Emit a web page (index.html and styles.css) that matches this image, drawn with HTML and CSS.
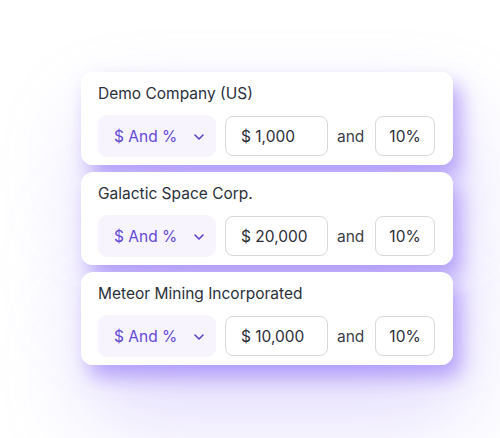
FILE: index.html
```html
<!DOCTYPE html>
<html lang="en">
<head>
<meta charset="utf-8">
<link rel="stylesheet" href="styles.css">
</head>
<body>
<main class="stack">
  <section class="card">
    <h2 class="title">Demo Company (US)</h2>
    <div class="row">
      <div class="select">
        <span>$ And %</span>
        <svg class="chev" width="10" height="6" viewBox="0 0 10 6"><path d="M1 1l4 4 4-4" fill="none" stroke="#5b3fc8" stroke-width="1.6" stroke-linecap="round" stroke-linejoin="round"/></svg>
      </div>
      <div class="input amount">$ 1,000</div>
      <span class="and">and</span>
      <div class="input pct">10%</div>
    </div>
  </section>
  <section class="card">
    <h2 class="title">Galactic Space Corp.</h2>
    <div class="row">
      <div class="select">
        <span>$ And %</span>
        <svg class="chev" width="10" height="6" viewBox="0 0 10 6"><path d="M1 1l4 4 4-4" fill="none" stroke="#5b3fc8" stroke-width="1.6" stroke-linecap="round" stroke-linejoin="round"/></svg>
      </div>
      <div class="input amount">$ 20,000</div>
      <span class="and">and</span>
      <div class="input pct">10%</div>
    </div>
  </section>
  <section class="card">
    <h2 class="title">Meteor Mining Incorporated</h2>
    <div class="row">
      <div class="select">
        <span>$ And %</span>
        <svg class="chev" width="10" height="6" viewBox="0 0 10 6"><path d="M1 1l4 4 4-4" fill="none" stroke="#5b3fc8" stroke-width="1.6" stroke-linecap="round" stroke-linejoin="round"/></svg>
      </div>
      <div class="input amount">$ 10,000</div>
      <span class="and">and</span>
      <div class="input pct">10%</div>
    </div>
  </section>
</main>
</body>
</html>
```
FILE: styles.css
```css
* { box-sizing: border-box; }
html, body { margin: 0; padding: 0; background: #ffffff; }
body {
  width: 500px;
  height: 438px;
  overflow: hidden;
  font-family: Inter, "Noto Sans", sans-serif;
}
.stack {
  position: relative;
  z-index: 0;
  padding: 72px 0 0 81px;
  display: flex;
  flex-direction: column;
  gap: 7px;
  width: 453px;
}
.card {
  position: relative;
  width: 372px;
  height: 93px;
  background: #ffffff;
  border-radius: 12px;
  padding: 0 18px 8px 17px;
}
.card::before {
  content: "";
  position: absolute;
  inset: 0;
  border-radius: 12px;
  z-index: -1;
  box-shadow: 8px 12px 20px rgba(135, 100, 245, 0.55), 10px 50px 90px rgba(160, 135, 250, 0.32);
}
.title {
  margin: 0;
  height: 43px;
  line-height: 44px;
  font-size: 15.5px;
  font-weight: 400;
  color: #2b2f3a;
}
.row {
  display: flex;
  align-items: center;
  height: 42px;
}
.select {
  width: 118px;
  height: 42px;
  border-radius: 9px;
  background: #f7f4fe;
  display: flex;
  align-items: center;
  padding-left: 16px;
  color: #6448d4;
  font-size: 15.5px;
}
.select span { width: 80px; }
.chev { display: block; margin-top: 1px; }
.input {
  height: 40px;
  border: 1px solid #d8d8dd;
  border-radius: 8px;
  display: flex;
  align-items: center;
  font-size: 15.5px;
  color: #2a2d36;
  background: #fff;
}
.amount {
  margin-left: 9px;
  width: 103px;
  padding-left: 15px;
}
.and {
  font-size: 15.5px;
  color: #3a3d46;
  margin-left: 9px;
  width: 38px;
}
.pct {
  width: 60px;
  justify-content: center;
}
```
